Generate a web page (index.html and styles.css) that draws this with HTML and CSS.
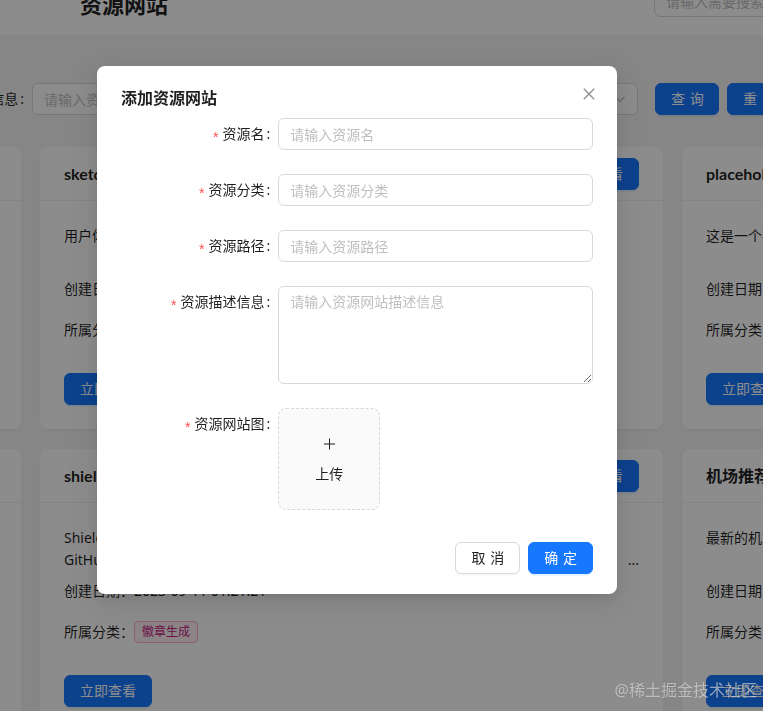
FILE: index.html
```html
<!DOCTYPE html>
<html lang="zh-CN">
<head>
<meta charset="utf-8">
<title>资源网站</title>
<link rel="stylesheet" href="styles.css">
</head>
<body>
<div class="page">
  <header class="topbar">
    <h1 class="site-title">资源网站</h1>
    <div class="search"><input class="input" placeholder="请输入需要搜索的资源名称"></div>
  </header>

  <main class="main">
    <form class="filter">
      <div class="f-item">
        <label class="f-label">资源描述信息</label>
        <input class="input f-input" placeholder="请输入资源描述信息">
      </div>
      <div class="f-item">
        <label class="f-label f-label-sm">资源分类</label>
        <div class="select">
          <span class="select-ph">请选择资源分类</span>
          <svg class="select-arrow" viewBox="0 0 12 12"><path d="M1.5 4l4.5 4.5L10.5 4"/></svg>
        </div>
      </div>
      <button type="button" class="btn btn-primary btn-query"><span class="two">查询</span></button>
      <button type="button" class="btn btn-primary btn-reset"><span class="two">重置</span></button>
    </form>

    <section class="cards">
      <article class="card">
        <div class="card-head">
          <div class="card-title">iconfont</div>
          <button type="button" class="btn btn-primary"><span class="two">查看</span></button>
        </div>
        <div class="card-body">
          <div class="desc"><div class="desc-line">阿里巴巴矢量图标库，提供海量图标下载与在线存储</div></div>
          <p class="meta">创建日期：2023-09-08 09:30:12</p>
          <div class="meta cat">所属分类：<span class="tag tag-blue">图标素材</span></div>
          <button type="button" class="btn btn-primary btn-view">立即查看</button>
        </div>
      </article>

      <article class="card">
        <div class="card-head">
          <div class="card-title">sketch</div>
          <button type="button" class="btn btn-primary"><span class="two">查看</span></button>
        </div>
        <div class="card-body">
          <div class="desc"><div class="desc-line">用户体验设计工具，可以在线绘制原型图与界面设计稿</div></div>
          <p class="meta">创建日期：2023-09-10 14:05:36</p>
          <div class="meta cat">所属分类：<span class="tag tag-green">设计工具</span></div>
          <button type="button" class="btn btn-primary btn-view">立即查看</button>
        </div>
      </article>

      <article class="card">
        <div class="card-head">
          <div class="card-title">placeholder</div>
          <button type="button" class="btn btn-primary"><span class="two">查看</span></button>
        </div>
        <div class="card-body">
          <div class="desc"><div class="desc-line">这是一个在线生成占位图片的网站</div></div>
          <p class="meta">创建日期：2023-09-10 16:42:08</p>
          <div class="meta cat">所属分类：<span class="tag tag-orange">图片生成</span></div>
          <button type="button" class="btn btn-primary btn-view">立即查看</button>
        </div>
      </article>

      <article class="card">
        <div class="card-head">
          <div class="card-title">unsplash</div>
          <button type="button" class="btn btn-primary"><span class="two">查看</span></button>
        </div>
        <div class="card-body">
          <div class="desc"><div class="desc-line">免费的高清无版权图片素材网站</div></div>
          <p class="meta">创建日期：2023-09-11 00:58:40</p>
          <div class="meta cat">所属分类：<span class="tag tag-blue">图片素材</span></div>
          <button type="button" class="btn btn-primary btn-view">立即查看</button>
        </div>
      </article>

      <article class="card">
        <div class="card-head">
          <div class="card-title">shields</div>
          <button type="button" class="btn btn-primary"><span class="two">查看</span></button>
        </div>
        <div class="card-body">
          <div class="desc">
            <div class="desc-line">Shields.io 是一个为开源项目提供简洁、一致、清晰的 SVG 徽章服务的网站</div>
            <div class="desc-line desc-more">
              <span class="desc-clip">GitHub 项目 README 中常见的构建状态、版本号、下载量、许可证等徽章都可以通过它快速生成，并且支持自定义颜色、样式与图标</span>
              <span class="desc-dots">...</span>
            </div>
          </div>
          <p class="meta">创建日期：2023-09-11 01:21:21</p>
          <div class="meta cat">所属分类：<span class="tag tag-magenta">徽章生成</span></div>
          <button type="button" class="btn btn-primary btn-view">立即查看</button>
        </div>
      </article>

      <article class="card">
        <div class="card-head">
          <div class="card-title">机场推荐</div>
          <button type="button" class="btn btn-primary"><span class="two">查看</span></button>
        </div>
        <div class="card-body">
          <div class="desc"><div class="desc-line">最新的机场推荐与测评汇总</div></div>
          <p class="meta">创建日期：2023-09-11 02:10:55</p>
          <div class="meta cat">所属分类：<span class="tag tag-cyan">网络工具</span></div>
          <button type="button" class="btn btn-primary btn-view">立即查看</button>
        </div>
      </article>
    </section>
  </main>
</div>

<div class="mask"></div>

<div class="modal" role="dialog" aria-label="添加资源网站">
  <div class="modal-head">
    <div class="modal-title">添加资源网站</div>
  </div>
  <button type="button" class="modal-close" aria-label="关闭">
    <svg viewBox="0 0 12 12"><path d="M0.8 0.8L11.2 11.2M11.2 0.8L0.8 11.2"/></svg>
  </button>
  <form class="form">
    <div class="form-item">
      <label class="form-label">资源名</label>
      <div class="form-ctrl"><input class="input" placeholder="请输入资源名"></div>
    </div>
    <div class="form-item">
      <label class="form-label">资源分类</label>
      <div class="form-ctrl"><input class="input" placeholder="请输入资源分类"></div>
    </div>
    <div class="form-item">
      <label class="form-label">资源路径</label>
      <div class="form-ctrl"><input class="input" placeholder="请输入资源路径"></div>
    </div>
    <div class="form-item">
      <label class="form-label">资源描述信息</label>
      <div class="form-ctrl"><textarea class="input textarea" placeholder="请输入资源网站描述信息"></textarea></div>
    </div>
    <div class="form-item">
      <label class="form-label">资源网站图</label>
      <div class="form-ctrl">
        <div class="upload">
          <svg class="plus" viewBox="0 0 14 14"><path d="M7 1v12M1 7h12"/></svg>
          <div class="upload-text">上传</div>
        </div>
      </div>
    </div>
  </form>
  <div class="modal-foot">
    <button type="button" class="btn"><span class="two">取消</span></button>
    <button type="button" class="btn btn-primary"><span class="two">确定</span></button>
  </div>
</div>

<div class="watermark">@稀土掘金技术社区</div>
</body>
</html>
```

FILE: styles.css
```css
* { box-sizing: border-box; }

html, body { height: 100%; }

body {
  margin: 0;
  overflow: hidden;
  background: #f5f5f5;
  font-family: "Noto Sans", "Noto Sans CJK SC", sans-serif;
  font-size: 14px;
  line-height: 22px;
  color: rgba(0, 0, 0, 0.88);
}

/* ---------- top bar (page is scrolled a little) ---------- */
.topbar {
  height: 62px;
  margin-top: -27px;
  background: #fff;
  display: grid;
  grid-template-columns: 574px 300px;
  align-items: center;
  padding-left: 80px;
}

.site-title {
  margin: 0;
  font-size: 22px;
  line-height: 30px;
  font-weight: 700;
}

.search { margin-bottom: 6px; }

/* ---------- controls ---------- */
.input {
  display: block;
  width: 100%;
  height: 32px;
  padding: 4px 11px;
  border: 1px solid #d9d9d9;
  border-radius: 6px;
  background: #fff;
  font: inherit;
  font-size: 14px;
  line-height: 22px;
  color: rgba(0, 0, 0, 0.88);
  outline: none;
}

.input::placeholder { color: #bfbfbf; }

.btn {
  height: 32px;
  padding: 0 15px;
  border: 1px solid #d9d9d9;
  border-radius: 6px;
  background: #fff;
  font: inherit;
  font-size: 14px;
  line-height: 30px;
  color: rgba(0, 0, 0, 0.88);
  box-shadow: 0 2px 0 rgba(0, 0, 0, 0.02);
  white-space: nowrap;
  cursor: pointer;
}

.btn-primary {
  background: #1677ff;
  border-color: #1677ff;
  color: #fff;
  box-shadow: 0 2px 0 rgba(5, 145, 255, 0.1);
}

.two {
  letter-spacing: 0.34em;
  margin-right: -0.34em;
}

/* ---------- filter row ---------- */
.filter {
  display: flex;
  align-items: center;
  margin: 48px 0 0 -78px;
}

.f-item {
  display: flex;
  align-items: center;
}

.f-item + .f-item { margin-left: 16px; }

.f-label {
  width: 110px;
  flex: none;
  text-align: right;
  white-space: nowrap;
}

.f-label::after {
  content: ":";
  margin: 0 8px 0 2px;
}

.f-label-sm { width: 80px; }

.f-input { width: 240px; }

.select {
  width: 270px;
  height: 32px;
  padding: 0 11px;
  border: 1px solid #d9d9d9;
  border-radius: 6px;
  background: #fff;
  display: flex;
  align-items: center;
  justify-content: space-between;
}

.select-ph { color: #bfbfbf; }

.select-arrow {
  width: 12px;
  height: 12px;
  fill: none;
  stroke: rgba(0, 0, 0, 0.25);
  stroke-width: 1.3;
}

.btn-query { margin-left: 17px; width: 64px; }
.btn-reset { margin-left: 8px; width: 64px; }

/* ---------- cards ---------- */
.cards {
  display: grid;
  grid-template-columns: repeat(3, 623px);
  column-gap: 19px;
  row-gap: 20px;
  margin: 32px 0 0 -602px;
}

.card {
  background: #fff;
  border-radius: 8px;
  box-shadow: 0 1px 2px rgba(0, 0, 0, 0.03), 0 1px 6px -1px rgba(0, 0, 0, 0.02), 0 2px 4px rgba(0, 0, 0, 0.02);
}

.card-head {
  height: 54px;
  padding: 0 24px;
  display: flex;
  align-items: center;
  justify-content: space-between;
  border-bottom: 1px solid #f0f0f0;
}

.card-title {
  font-family: "Lato", "Noto Sans CJK SC", sans-serif;
  font-size: 16px;
  font-weight: 700;
}

.card-body { padding: 24px; }

.desc {
  height: 44px;
  overflow: hidden;
}

.desc-line {
  white-space: nowrap;
  overflow: hidden;
}

.desc-more {
  display: flex;
  gap: 12px;
}

.desc-clip {
  flex: 1;
  min-width: 0;
  overflow: hidden;
}

.desc-dots { flex: none; }

.meta { margin: 9px 0 0; }

.cat {
  margin-top: 19px;
  display: flex;
  align-items: center;
  height: 22px;
}

.tag {
  display: inline-block;
  height: 22px;
  padding: 0 7px;
  border: 1px solid;
  border-radius: 4px;
  font-size: 12px;
  line-height: 20px;
}

.tag-magenta { color: #c41d7f; background: #fff0f6; border-color: #ffadd2; }
.tag-blue { color: #0958d9; background: #e6f4ff; border-color: #91caff; }
.tag-green { color: #389e0d; background: #f6ffed; border-color: #b7eb8f; }
.tag-orange { color: #d46b08; background: #fff7e6; border-color: #ffd591; }
.tag-cyan { color: #08979c; background: #e6fffb; border-color: #87e8de; }

.btn-view {
  display: block;
  margin-top: 32px;
}

/* ---------- modal ---------- */
.mask {
  position: fixed;
  inset: 0;
  background: rgba(0, 0, 0, 0.45);
  z-index: 1000;
}

.modal {
  position: absolute;
  left: 97px;
  top: 66px;
  width: 520px;
  padding: 20px 24px;
  background: #fff;
  border-radius: 8px;
  box-shadow: 0 6px 16px 0 rgba(0, 0, 0, 0.08), 0 3px 6px -4px rgba(0, 0, 0, 0.12), 0 9px 28px 8px rgba(0, 0, 0, 0.05);
  z-index: 1001;
}

.modal-head { margin-bottom: 8px; }

.modal-title {
  font-size: 16px;
  line-height: 24px;
  font-weight: 600;
}

.modal-close {
  position: absolute;
  top: 17px;
  right: 17px;
  width: 22px;
  height: 22px;
  padding: 0;
  border: 0;
  background: transparent;
  display: flex;
  align-items: center;
  justify-content: center;
}

.modal-close svg {
  width: 12px;
  height: 12px;
  fill: none;
  stroke: rgba(0, 0, 0, 0.45);
  stroke-width: 1.3;
}

.form { display: flow-root; }

.form-item {
  display: grid;
  grid-template-columns: 1fr 2fr;
  margin-bottom: 24px;
}

.form-label {
  text-align: right;
  line-height: 32px;
  white-space: nowrap;
}

.form-label::before {
  content: "*";
  display: inline-block;
  margin-right: 4px;
  color: #ff4d4f;
  font-family: "Liberation Sans", sans-serif;
  font-size: 14px;
  line-height: 1;
  transform: translateY(3px);
}

.form-label::after {
  content: ":";
  margin: 0 8px 0 2px;
}

.textarea {
  height: 98px;
  resize: vertical;
}

.upload {
  width: 102px;
  height: 102px;
  border: 1px dashed #d9d9d9;
  border-radius: 8px;
  background: #fafafa;
  display: flex;
  flex-direction: column;
  align-items: center;
  justify-content: center;
}

.plus {
  width: 13px;
  height: 22px;
  fill: none;
  stroke: rgba(0, 0, 0, 0.88);
  stroke-width: 1.1;
}

.upload-text { margin-top: 8px; }

.modal-foot {
  display: flex;
  justify-content: flex-end;
  gap: 8px;
  margin-top: 8px;
}

/* ---------- watermark ---------- */
.watermark {
  position: fixed;
  right: 6px;
  bottom: 10px;
  font-size: 16px;
  line-height: 22px;
  color: rgba(255, 255, 255, 0.55);
  text-shadow: 0 0 1px rgba(0, 0, 0, 0.25);
  z-index: 1002;
}
```
